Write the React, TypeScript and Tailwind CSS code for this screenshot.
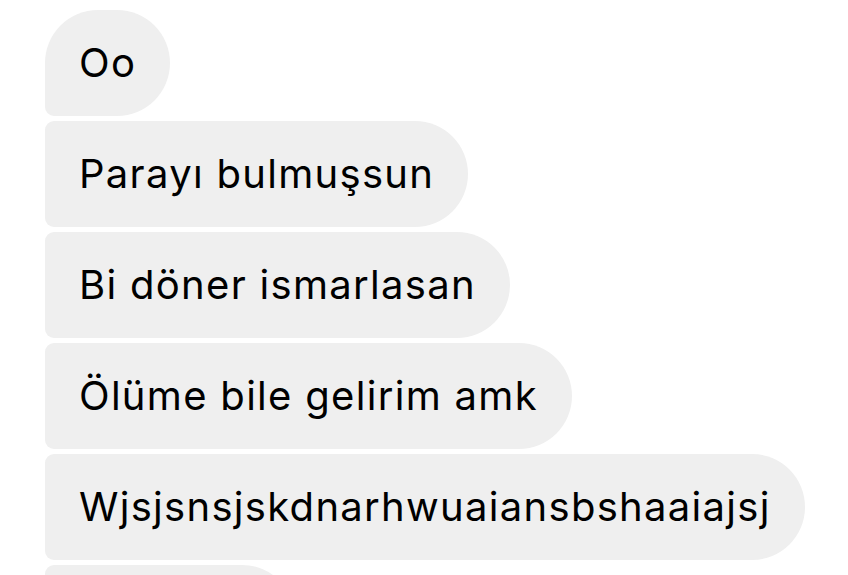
const messages = [
  "Oo",
  "Parayı bulmuşsun",
  "Bi döner ismarlasan",
  "Ölüme bile gelirim amk",
  "Wjsjsnsjskdnarhwuaiansbshaaiajsj",
];

function Bubble({ text, first }: { text: string; first?: boolean }) {
  return (
    <div
      className={`flex h-[106px] items-center bg-[#efefef] px-[34px] rounded-r-[53px] rounded-bl-[9px] ${
        first ? "rounded-tl-[53px]" : "rounded-tl-[9px]"
      }`}
    >
      <span className="text-[40px] leading-none tracking-[1.3px] text-black whitespace-nowrap">{text}</span>
    </div>
  );
}

export default function App() {
  return (
    <div
      className="h-[575px] w-[848px] overflow-hidden bg-white"
      style={{ fontFamily: "Inter, 'Noto Sans', sans-serif" }}
    >
      <div className="flex flex-col items-start gap-[5px] pl-[45px] pt-[10px]">
        {messages.map((m, i) => (
          <Bubble key={i} text={m} first={i === 0} />
        ))}
        <div className="h-[106px] w-[250px] bg-[#efefef] rounded-r-[53px] rounded-l-[9px]" />
      </div>
    </div>
  );
}
